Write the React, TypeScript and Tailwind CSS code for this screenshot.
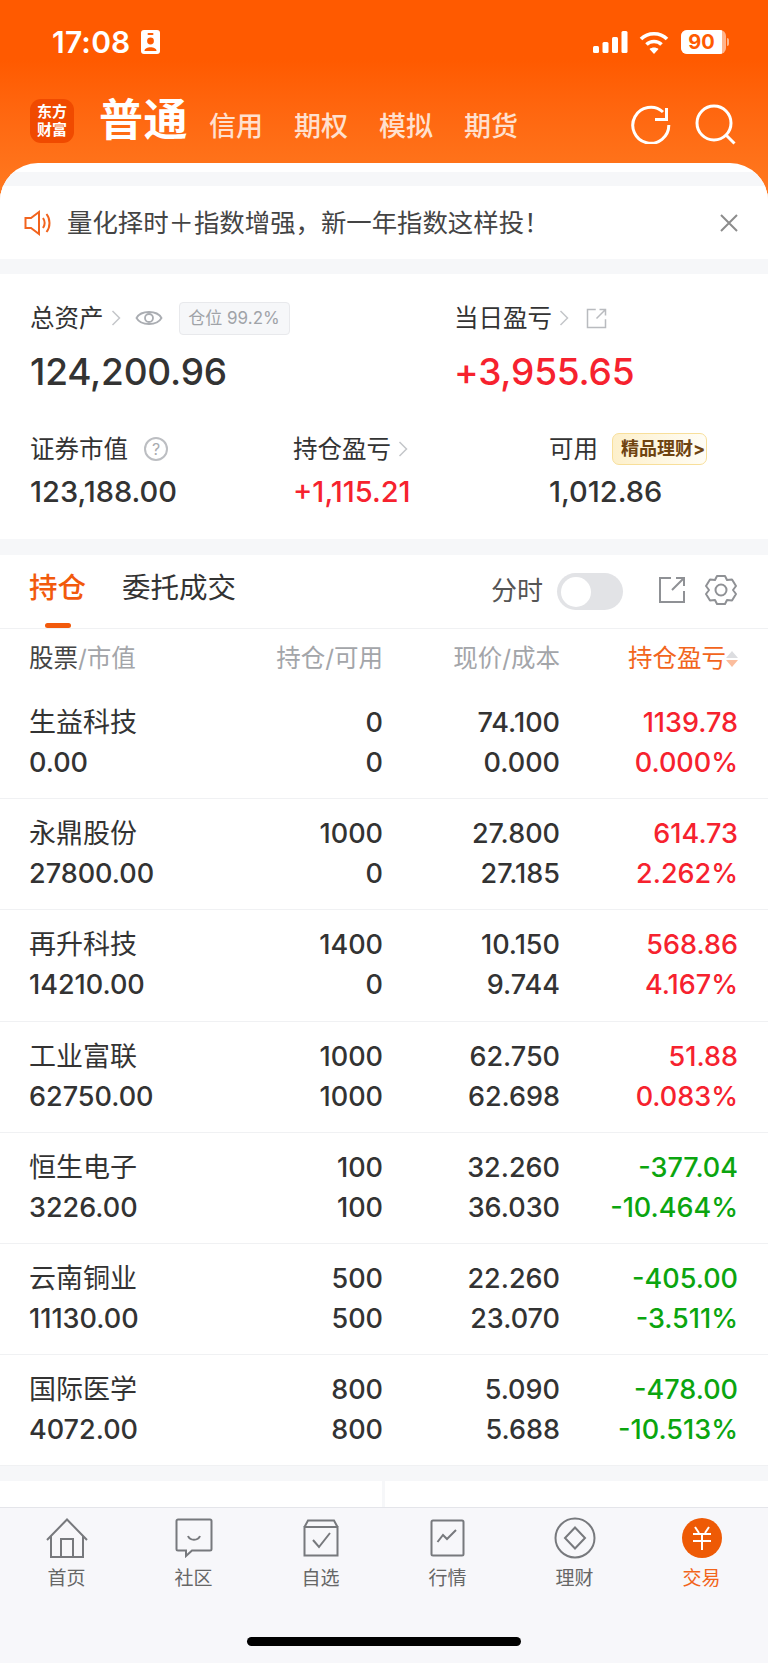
import React from 'react';

const RED = 'text-[#f6222e]';
const GREEN = 'text-[#0ba50f]';

const rows = [
    { name: '生益科技', value: '0.00', qty: '0', avail: '0', price: '74.100', cost: '0.000', pl: '1139.78', pct: '0.000%', up: true },
    { name: '永鼎股份', value: '27800.00', qty: '1000', avail: '0', price: '27.800', cost: '27.185', pl: '614.73', pct: '2.262%', up: true },
    { name: '再升科技', value: '14210.00', qty: '1400', avail: '0', price: '10.150', cost: '9.744', pl: '568.86', pct: '4.167%', up: true },
    { name: '工业富联', value: '62750.00', qty: '1000', avail: '1000', price: '62.750', cost: '62.698', pl: '51.88', pct: '0.083%', up: true },
    { name: '恒生电子', value: '3226.00', qty: '100', avail: '100', price: '32.260', cost: '36.030', pl: '-377.04', pct: '-10.464%', up: false },
    { name: '云南铜业', value: '11130.00', qty: '500', avail: '500', price: '22.260', cost: '23.070', pl: '-405.00', pct: '-3.511%', up: false },
    { name: '国际医学', value: '4072.00', qty: '800', avail: '800', price: '5.090', cost: '5.688', pl: '-478.00', pct: '-10.513%', up: false },
];

const Chevron = ({ className = '' }: { className?: string }) => (
    <svg width="10" height="20" viewBox="0 0 10 20" fill="none" stroke="#c4c6ca" strokeWidth="1.5" className={className}>
        <path d="M1.5 3 L8.5 10 L1.5 17" />
    </svg>
);

const ExternalIcon = ({ size, color }: { size: number; color: string }) => (
    <svg width={size} height={size} viewBox="0 0 28 28" fill="none" stroke={color} strokeWidth="2">
        <path d="M13 2 H2 V26 H26 V15" />
        <path d="M14 14 L26 2 M18 2 H26 V10" />
    </svg>
);

const StatusBar = () => (
    <div className="h-[84px] flex items-center justify-between pl-[52px] pr-[39px] text-white">
        <div className="flex items-center gap-[10px]">
            <span className="text-[30px] font-semibold leading-none tracking-[0.2px]">17:08</span>
            <svg width="19" height="24" viewBox="0 0 19 24">
                <rect x="0" y="0" width="19" height="24" rx="3" fill="#fff" />
                <rect x="6.5" y="3" width="6" height="2" rx="1" fill="#ff5a00" />
                <circle cx="9.5" cy="11" r="3.4" fill="#ff5a00" />
                <path d="M3.5 21 C3.5 16 15.5 16 15.5 21 Z" fill="#ff5a00" />
            </svg>
        </div>
        <div className="flex items-center">
            <svg width="35" height="22" viewBox="0 0 35 22" fill="#fff">
                <rect x="0" y="15" width="6" height="7" rx="1.5" />
                <rect x="9.5" y="11" width="6" height="11" rx="1.5" />
                <rect x="19" y="6" width="6" height="16" rx="1.5" />
                <rect x="28.5" y="0" width="6" height="22" rx="1.5" />
            </svg>
            <svg width="30" height="23" viewBox="0 0 30 23" fill="none" stroke="#fff" strokeWidth="3.6" className="ml-[11px]">
                <path d="M2 8 C9 1 21 1 28 8" />
                <path d="M7.5 13.5 C11.5 9.5 18.5 9.5 22.5 13.5" />
                <path d="M15 23 L10.5 18 C13 16 17 16 19.5 18 Z" fill="#fff" stroke="none" />
            </svg>
            <div className="ml-[12px] flex items-center">
                <div className="w-[45px] h-[24px] rounded-[6px] bg-[#ffb48c] overflow-hidden">
                    <div className="w-[41px] h-full bg-white flex items-center justify-center text-[#ff5a00] text-[20px] font-bold leading-none">90</div>
                </div>
                <div className="ml-[1px] w-[2px] h-[8px] rounded-r-full bg-[#ffb48c]" />
            </div>
        </div>
    </div>
);

const TopNav = () => (
    <div className="h-[79px] flex pl-[30px] pr-[32px] text-white">
        <div className="mt-[15px] w-[44px] h-[44px] rounded-[11px] bg-[#f04a00] flex flex-col items-center justify-center text-[15px] font-bold leading-[18px]">
            <span>东方</span>
            <span>财富</span>
        </div>
        <div className="ml-[25px] mt-[8px] text-[44px] font-bold leading-[56px] tracking-[0.5px]">普通</div>
        <div className="ml-[21px] mt-[26px] flex gap-[31px] text-[27px] font-medium leading-[34px] text-[#ffe0cf]">
            <span>信用</span>
            <span>期权</span>
            <span>模拟</span>
            <span>期货</span>
        </div>
        <div className="ml-auto mt-[20px] flex gap-[24px] h-[42px]">
            <svg width="40" height="40" viewBox="0 0 40 40" fill="none" stroke="#fff" strokeWidth="3">
                <path d="M32 8 A18 18 0 1 0 37.8 21" />
                <path d="M35.5 4 V15.5 H24" />
            </svg>
            <svg width="41" height="41" viewBox="0 0 41 41" fill="none" stroke="#fff" strokeWidth="3">
                <circle cx="19" cy="19" r="17" />
                <path d="M31 31 L39.5 39.5" />
            </svg>
        </div>
    </div>
);

const Notice = () => (
    <div className="h-[73px] bg-white flex items-center pl-[24px] pr-[30px]">
        <svg width="27" height="26" viewBox="0 0 27 26" fill="none" stroke="#f2641e" strokeWidth="2">
            <path d="M1.5 8 H7 L15 2 V24 L7 18 H1.5 Z" />
            <path d="M19 8 C21 11 21 15 19 18" />
            <path d="M22.5 4 C26.5 9 26.5 17 22.5 22" />
        </svg>
        <span className="ml-[16px] text-[25.4px] leading-none text-[#444]">量化择时＋指数增强，新一年指数这样投！</span>
        <svg width="18" height="18" viewBox="0 0 18 18" stroke="#8c8c8c" strokeWidth="2" className="ml-auto">
            <path d="M1 1 L17 17 M17 1 L1 17" />
        </svg>
    </div>
);

const Assets = () => (
    <div className="h-[265px] bg-white pl-[30px] text-[#333]">
        <div className="flex pt-[25px]">
            <div className="w-[424px]">
                <div className="h-[38px] flex items-center text-[24.5px] leading-none">
                    <span>总资产</span>
                    <Chevron className="ml-[7px]" />
                    <svg width="28" height="20" viewBox="0 0 28 20" fill="none" stroke="#aaadb2" strokeWidth="1.8" className="ml-[14px]">
                        <path d="M1.5 10 C6 2 22 2 26.5 10 C22 18 6 18 1.5 10 Z" />
                        <circle cx="14" cy="10" r="4" />
                    </svg>
                    <div className="ml-[16px] w-[111px] h-[33px] rounded-[4px] bg-[#f6f7f9] border border-[#e8e9ec] flex items-center justify-center text-[17px] text-[#a0a3a8]">仓位 99.2%</div>
                </div>
                <div className="mt-[13px] text-[37px] font-medium leading-[44px] tracking-[-0.2px]">124,200.96</div>
            </div>
            <div>
                <div className="h-[38px] flex items-center text-[24.5px] leading-none">
                    <span>当日盈亏</span>
                    <Chevron className="ml-[7px]" />
                    <span className="ml-[17px] flex"><ExternalIcon size={21} color="#b9bbbf" /></span>
                </div>
                <div className={`mt-[13px] text-[37px] font-medium leading-[44px] tracking-[-0.2px] ${RED}`}>+3,955.65</div>
            </div>
        </div>
        <div className="flex pt-[36px]">
            <div className="w-[263px]">
                <div className="h-[38px] flex items-center text-[24.5px] leading-none">
                    <span>证券市值</span>
                    <span className="ml-[16px] w-[24px] h-[24px] rounded-full border-2 border-[#bcbec2] flex items-center justify-center text-[16px] text-[#a9abaf]">?</span>
                </div>
                <div className="mt-[6px] text-[29px] font-medium leading-[36px]">123,188.00</div>
            </div>
            <div className="w-[256px]">
                <div className="h-[38px] flex items-center text-[24.5px] leading-none">
                    <span>持仓盈亏</span>
                    <Chevron className="ml-[7px]" />
                </div>
                <div className={`mt-[6px] text-[29px] font-medium leading-[36px] ${RED}`}>+1,115.21</div>
            </div>
            <div>
                <div className="h-[38px] flex items-center text-[24.5px] leading-none">
                    <span>可用</span>
                    <span className="ml-[14px] w-[95px] h-[32px] rounded-[7px] border border-[#f8df9a] bg-gradient-to-r from-[#fdf0cb] to-[#fffdf6] flex items-center pl-[8px] text-[18px] font-bold text-[#6e4310]">精品理财&gt;</span>
                </div>
                <div className="mt-[6px] text-[29px] font-medium leading-[36px]">1,012.86</div>
            </div>
        </div>
    </div>
);

const Tabs = () => (
    <div className="h-[74px] bg-white border-b border-[#f0f1f3] flex pl-[29px] pr-[30px]">
        <div className="relative mt-[12px] text-[28.5px] leading-[42px] font-medium text-[#f25a0c]">
            持仓
            <div className="absolute left-[16px] top-[56px] w-[26px] h-[5px] rounded-full bg-[#f25a0c]" />
        </div>
        <div className="ml-[36px] mt-[12px] text-[28.5px] leading-[42px] text-[#333]">委托成交</div>
        <div className="ml-auto flex items-start pt-[18px]">
            <span className="text-[26px] leading-[36px] text-[#555]">分时</span>
            <div className="ml-[14px] w-[66px] h-[37px] rounded-full bg-[#e2e3e6] flex items-center pl-[4px]">
                <div className="w-[30px] h-[30px] rounded-full bg-white" />
            </div>
            <span className="ml-[35px] flex mt-[3px]"><ExternalIcon size={28} color="#8f9195" /></span>
            <svg width="34" height="34" viewBox="0 0 34 34" fill="none" stroke="#8f9195" strokeWidth="2" className="ml-[18px]">
                <path d="M13 3 L21 3 L23 7 L28 6.5 L32 13 L29 17 L32 21 L28 27.5 L23 27 L21 31 L13 31 L11 27 L6 27.5 L2 21 L5 17 L2 13 L6 6.5 L11 7 Z" strokeLinejoin="round" />
                <circle cx="17" cy="17" r="5.5" />
            </svg>
        </div>
    </div>
);

const TableHead = () => (
    <div className="h-[59px] bg-white grid grid-cols-[200px_154px_177px_178px] pl-[29px] items-center text-[24.5px] leading-none text-[#a3a5a9]">
        <div>
            <span className="text-[#444]">股票</span>
            <span>/市值</span>
        </div>
        <div className="text-right">持仓/可用</div>
        <div className="text-right">现价/成本</div>
        <div className="flex items-center justify-end text-[#f2651c]">
            持仓盈亏
            <span className="flex flex-col gap-[2px]">
                <span className="w-0 h-0 border-x-[6px] border-x-transparent border-b-[7px] border-b-[#dcdde0]" />
                <span className="w-0 h-0 border-x-[6px] border-x-transparent border-t-[7px] border-t-[#fbbd9d]" />
            </span>
        </div>
    </div>
);

const PositionRow = ({ row }: { row: (typeof rows)[number] }) => {
    const color = row.up ? RED : GREEN;
    return (
        <div className="h-[111.2px] border-b border-[#f0f1f3] grid grid-cols-[200px_154px_177px_178px] grid-rows-[40px_40px] content-center pl-[29px] text-[27px] font-medium leading-[40px] text-[#333]">
            <div className="font-normal">{row.name}</div>
            <div className="text-right">{row.qty}</div>
            <div className="text-right">{row.price}</div>
            <div className={`text-right ${color}`}>{row.pl}</div>
            <div>{row.value}</div>
            <div className="text-right">{row.avail}</div>
            <div className="text-right">{row.cost}</div>
            <div className={`text-right ${color}`}>{row.pct}</div>
        </div>
    );
};

const navItems = [
    {
        label: '首页',
        icon: (
            <svg width="42" height="40" viewBox="0 0 42 40" fill="none" stroke="#77797d" strokeWidth="2">
                <path d="M1 22 L21 1.5 L41 22" />
                <path d="M5 18 V39 H37 V18" />
                <path d="M15 39 V21 H27 V39" />
            </svg>
        ),
    },
    {
        label: '社区',
        icon: (
            <svg width="38" height="40" viewBox="0 0 38 40" fill="none" stroke="#77797d" strokeWidth="2">
                <path d="M3 1.5 H35 A1.5 1.5 0 0 1 36.5 3 V31 A1.5 1.5 0 0 1 35 32.5 H17 L11 38 V32.5 H3 A1.5 1.5 0 0 1 1.5 31 V3 A1.5 1.5 0 0 1 3 1.5 Z" />
                <path d="M13 18 C15 23 23 23 25 18" />
            </svg>
        ),
    },
    {
        label: '自选',
        icon: (
            <svg width="36" height="38" viewBox="0 0 36 38" fill="none" stroke="#77797d" strokeWidth="2">
                <path d="M1.5 8 V36.5 H34.5 V8 Z" />
                <path d="M1.5 8 L5 1.5 H31 L34.5 8" />
                <path d="M10 21 L16 28 L27 14" />
            </svg>
        ),
    },
    {
        label: '行情',
        icon: (
            <svg width="35" height="38" viewBox="0 0 35 38" fill="none" stroke="#77797d" strokeWidth="2">
                <rect x="1.5" y="1.5" width="32" height="35" rx="1.5" />
                <path d="M7.5 23 L13 16 L17 20 L26 11" />
            </svg>
        ),
    },
    {
        label: '理财',
        icon: (
            <svg width="42" height="42" viewBox="0 0 42 42" fill="none" stroke="#77797d" strokeWidth="2">
                <circle cx="21" cy="21" r="19.5" />
                <path d="M21 10.5 L31 21 L21 31.5 L11 21 Z" />
            </svg>
        ),
    },
    {
        label: '交易',
        active: true,
        icon: (
            <span className="w-[40px] h-[40px] rounded-full bg-[#ee5a05] flex items-center justify-center">
                <svg width="22" height="24" viewBox="0 0 22 24" fill="none" stroke="#fff" strokeWidth="2">
                    <path d="M4 1 L8 7 M18 1 L14 7 M2 8 H20 M2 15 H20 M11 8 V24" />
                </svg>
            </span>
        ),
    },
];

const BottomNav = () => (
    <div className="flex-1 bg-[#f7f7fa] border-t border-[#e4e5ea] relative">
        <div className="grid grid-cols-6 pl-[3px] pr-[3px]">
            {navItems.map((item) => (
                <div key={item.label} className="flex flex-col items-center">
                    <div className="h-[44px] mt-[8px] flex items-center justify-center">{item.icon}</div>
                    <div className={`mt-[5px] text-[19px] leading-[28px] ${item.active ? 'text-[#f2651c]' : 'text-[#666]'}`}>{item.label}</div>
                </div>
            ))}
        </div>
        <div className="absolute left-[247px] top-[129px] w-[274px] h-[9px] rounded-full bg-black" />
    </div>
);

export default function App() {
    return (
        <div
            className="w-[768px] h-[1663px] flex flex-col overflow-hidden bg-gradient-to-b from-[#ff5a00] from-[60px] to-[#ff7a20] to-[200px]"
            style={{ fontFamily: 'Inter, "Noto Sans CJK SC", sans-serif' }}
        >
            <StatusBar />
            <TopNav />
            <div className="flex-1 flex flex-col bg-white rounded-t-[38px] pt-[9px] overflow-hidden">
                <div className="flex-1 flex flex-col bg-[#f6f7f9] pt-[14px]">
                    <Notice />
                    <div className="h-[15px]" />
                    <Assets />
                    <div className="h-[16px]" />
                    <Tabs />
                    <TableHead />
                    <div className="bg-white">
                        {rows.map((row) => (
                            <PositionRow key={row.name} row={row} />
                        ))}
                    </div>
                    <div className="h-[15px]" />
                    <div className="h-[26px] grid grid-cols-[382px_1fr] gap-[3px]">
                        <div className="bg-white" />
                        <div className="bg-white" />
                    </div>
                    <BottomNav />
                </div>
            </div>
        </div>
    );
}
